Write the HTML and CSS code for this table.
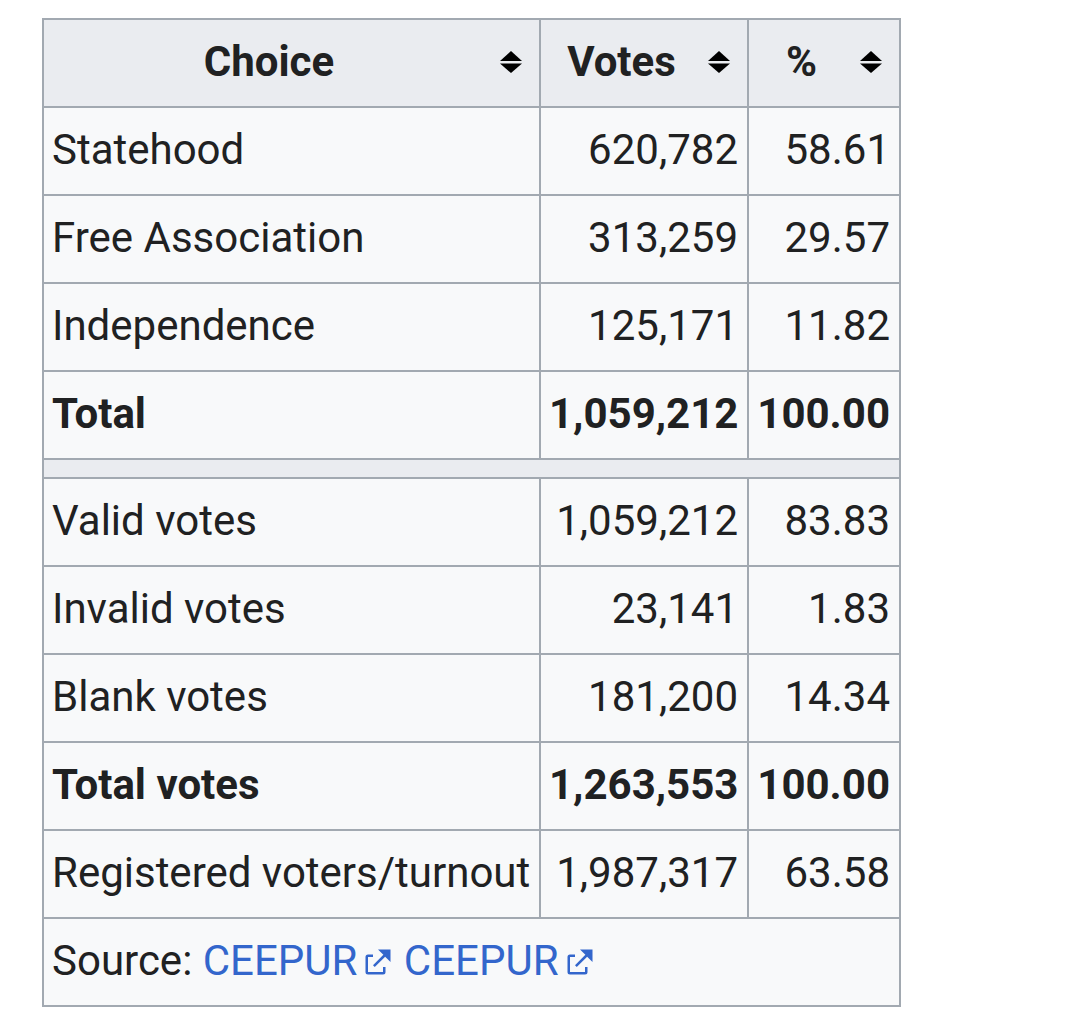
FILE: index.html
```html
<!DOCTYPE html>
<html lang="en">
<head>
<meta charset="utf-8">
<title>Referendum results</title>
<link rel="stylesheet" href="styles.css">
</head>
<body>
<table class="wikitable">
  <colgroup>
    <col class="col-choice">
    <col class="col-votes">
    <col class="col-pct">
  </colgroup>
  <thead>
    <tr>
      <th><div class="th-inner"><span class="th-label">Choice</span><svg class="sort" viewBox="0 0 22 22" width="22" height="22"><polygon points="0,10 11,0 22,10"/><polygon points="0,12.5 22,12.5 11,22"/></svg></div></th>
      <th><div class="th-inner"><span class="th-label">Votes</span><svg class="sort" viewBox="0 0 22 22" width="22" height="22"><polygon points="0,10 11,0 22,10"/><polygon points="0,12.5 22,12.5 11,22"/></svg></div></th>
      <th><div class="th-inner"><span class="th-label">%</span><svg class="sort" viewBox="0 0 22 22" width="22" height="22"><polygon points="0,10 11,0 22,10"/><polygon points="0,12.5 22,12.5 11,22"/></svg></div></th>
    </tr>
  </thead>
  <tbody>
    <tr><td>Statehood</td><td class="num">620,782</td><td class="num">58.61</td></tr>
    <tr><td>Free Association</td><td class="num">313,259</td><td class="num">29.57</td></tr>
    <tr><td>Independence</td><td class="num">125,171</td><td class="num">11.82</td></tr>
    <tr class="total"><td>Total</td><td class="num">1,059,212</td><td class="num">100.00</td></tr>
    <tr class="sep"><td colspan="3"></td></tr>
    <tr><td>Valid votes</td><td class="num">1,059,212</td><td class="num">83.83</td></tr>
    <tr><td>Invalid votes</td><td class="num">23,141</td><td class="num">1.83</td></tr>
    <tr><td>Blank votes</td><td class="num">181,200</td><td class="num">14.34</td></tr>
    <tr class="total"><td>Total votes</td><td class="num">1,263,553</td><td class="num">100.00</td></tr>
    <tr><td>Registered voters/turnout</td><td class="num">1,987,317</td><td class="num">63.58</td></tr>
    <tr><td colspan="3" class="source">Source: <a href="#" class="ext">CEEPUR<svg class="ext-icon" viewBox="0 0 12 12" width="30" height="30"><path d="M6 1h5v5L8.86 3.85 4.7 8 4 7.3l4.15-4.16zM2 3h2v1H2v6h6V8h1v2a1 1 0 0 1-1 1H2a1 1 0 0 1-1-1V4a1 1 0 0 1 1-1"/></svg></a> <a href="#" class="ext">CEEPUR<svg class="ext-icon" viewBox="0 0 12 12" width="30" height="30"><path d="M6 1h5v5L8.86 3.85 4.7 8 4 7.3l4.15-4.16zM2 3h2v1H2v6h6V8h1v2a1 1 0 0 1-1 1H2a1 1 0 0 1-1-1V4a1 1 0 0 1 1-1"/></svg></a></td></tr>
  </tbody>
</table>
</body>
</html>
```

FILE: styles.css
```css
html, body {
  margin: 0;
  padding: 0;
  background: #ffffff;
}

body {
  font-family: Roboto, "Liberation Sans", Arial, sans-serif;
  color: #202122;
  padding: 18px 0 0 42px;
}

.wikitable {
  border-collapse: collapse;
  table-layout: fixed;
  width: 857px;
  background: #f8f9fa;
  border: 2px solid #a2a9b1;
  font-size: 42px;
  line-height: 50px;
}

.col-choice { width: 497px; }
.col-votes { width: 208px; }
.col-pct { width: 152px; }

.wikitable th,
.wikitable td {
  border: 2px solid #a2a9b1;
  padding: 17px 9px 19px 8px;
  vertical-align: middle;
  white-space: nowrap;
}

.wikitable th {
  background: #eaecf0;
  font-weight: 700;
  padding-left: 10px;
  padding-right: 17px;
}

.th-inner {
  display: flex;
  align-items: center;
}

.th-label {
  flex: 1;
  text-align: center;
  margin-right: 16px;
}

.sort {
  flex: none;
  fill: #000000;
}

.num {
  text-align: right;
}

.total td {
  font-weight: 700;
}

.sep td {
  background: #eaecf0;
  padding: 0;
  height: 17px;
  line-height: 17px;
}

.ext {
  color: #3366cc;
  text-decoration: none;
}

.ext-icon {
  fill: #3366cc;
  vertical-align: -2px;
  margin-left: 6px;
}
```
